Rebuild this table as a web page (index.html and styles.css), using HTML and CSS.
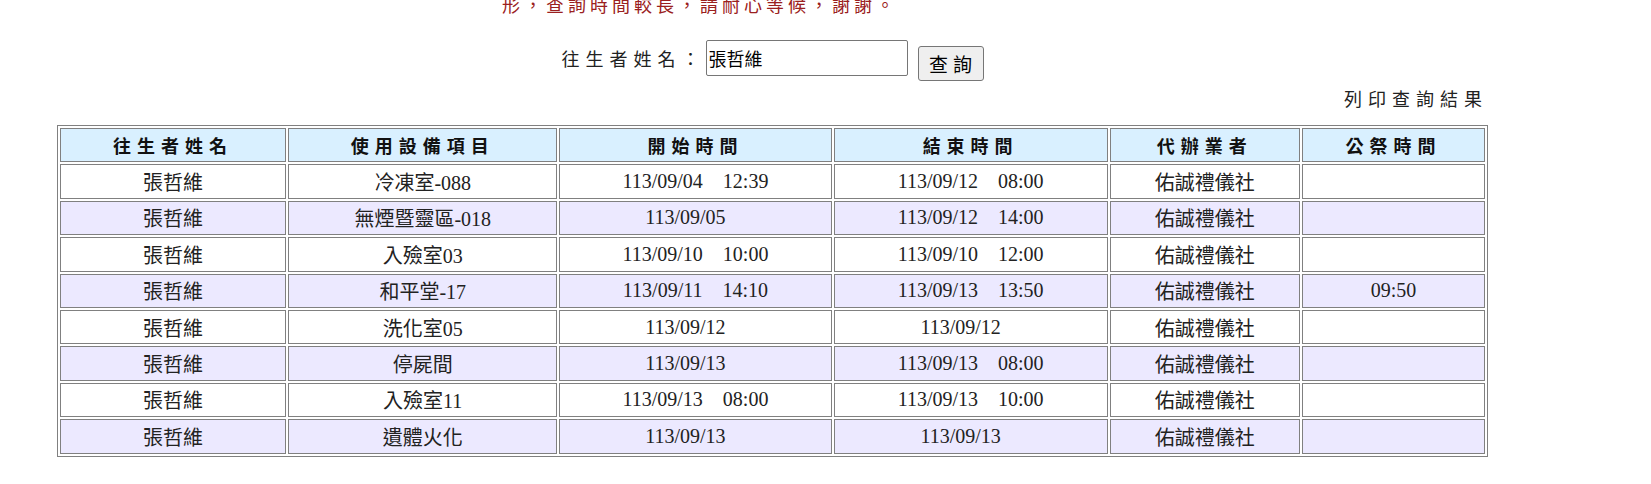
FILE: index.html
```html
<!DOCTYPE html>
<html lang="zh-Hant">
<head>
<meta charset="utf-8">
<title>查詢結果</title>
<link rel="stylesheet" href="styles.css">
</head>
<body>
<div class="page">
  <p class="notice">形，查詢時間較長，請耐心等候，謝謝。</p>
  <form class="search">
    <label class="search-label" for="name">往生者姓名：</label><input id="name" class="search-input" type="text" value="張哲維"><button type="button" class="search-btn">查詢</button>
  </form>
  <div class="print-row"><a class="print-link">列印查詢結果</a></div>
  <table class="result">
    <thead>
      <tr>
        <th class="c1">往生者姓名</th>
        <th class="c2">使用設備項目</th>
        <th class="c3">開始時間</th>
        <th class="c4">結束時間</th>
        <th class="c5">代辦業者</th>
        <th class="c6">公祭時間</th>
      </tr>
    </thead>
    <tbody>
      <tr>
        <td>張哲維</td><td>冷凍室-088</td><td>113/09/04&nbsp;&nbsp;&nbsp;&nbsp;12:39</td><td>113/09/12&nbsp;&nbsp;&nbsp;&nbsp;08:00</td><td>佑誠禮儀社</td><td></td>
      </tr>
      <tr class="alt">
        <td>張哲維</td><td>無煙暨靈區-018</td><td>113/09/05&nbsp;&nbsp;&nbsp;&nbsp;</td><td>113/09/12&nbsp;&nbsp;&nbsp;&nbsp;14:00</td><td>佑誠禮儀社</td><td></td>
      </tr>
      <tr>
        <td>張哲維</td><td>入殮室03</td><td>113/09/10&nbsp;&nbsp;&nbsp;&nbsp;10:00</td><td>113/09/10&nbsp;&nbsp;&nbsp;&nbsp;12:00</td><td>佑誠禮儀社</td><td></td>
      </tr>
      <tr class="alt">
        <td>張哲維</td><td>和平堂-17</td><td>113/09/11&nbsp;&nbsp;&nbsp;&nbsp;14:10</td><td>113/09/13&nbsp;&nbsp;&nbsp;&nbsp;13:50</td><td>佑誠禮儀社</td><td>09:50</td>
      </tr>
      <tr>
        <td>張哲維</td><td>洗化室05</td><td>113/09/12&nbsp;&nbsp;&nbsp;&nbsp;</td><td>113/09/12&nbsp;&nbsp;&nbsp;&nbsp;</td><td>佑誠禮儀社</td><td></td>
      </tr>
      <tr class="alt">
        <td>張哲維</td><td>停屍間</td><td>113/09/13&nbsp;&nbsp;&nbsp;&nbsp;</td><td>113/09/13&nbsp;&nbsp;&nbsp;&nbsp;08:00</td><td>佑誠禮儀社</td><td></td>
      </tr>
      <tr>
        <td>張哲維</td><td>入殮室11</td><td>113/09/13&nbsp;&nbsp;&nbsp;&nbsp;08:00</td><td>113/09/13&nbsp;&nbsp;&nbsp;&nbsp;10:00</td><td>佑誠禮儀社</td><td></td>
      </tr>
      <tr class="alt">
        <td>張哲維</td><td>遺體火化</td><td>113/09/13&nbsp;&nbsp;&nbsp;&nbsp;</td><td>113/09/13&nbsp;&nbsp;&nbsp;&nbsp;</td><td>佑誠禮儀社</td><td></td>
      </tr>
    </tbody>
  </table>
</div>
</body>
</html>
```

FILE: styles.css
```css
html, body {
  margin: 0;
  padding: 0;
  background: #ffffff;
}

body {
  font-family: "Noto Sans CJK TC", "Noto Sans", sans-serif;
  color: #000;
  overflow: hidden;
}

.page {
  width: 1431px;
  margin-left: 57px;
}

.notice {
  margin: -8px 0 0 0;
  padding-left: 445px;
  font-size: 18px;
  line-height: 24px;
  letter-spacing: 4px;
  color: #9a2020;
}

.search {
  margin: 24px 0 0 0;
  text-align: center;
  font-size: 18px;
  line-height: 24px;
}

.search-label {
  letter-spacing: 6px;
  color: #222;
}

.search-input {
  box-sizing: border-box;
  width: 202px;
  height: 36px;
  margin: 0;
  padding: 0 2px;
  border: 1px solid #767676;
  border-radius: 2px;
  font-family: "Noto Sans CJK TC", sans-serif;
  font-size: 18px;
  color: #000;
  vertical-align: baseline;
}

.search-btn {
  box-sizing: border-box;
  width: 66px;
  height: 35px;
  margin: 0 0 0 10px;
  padding: 0 0 0 5px;
  border: 1px solid #767676;
  border-radius: 3px;
  background: #efefef;
  font-family: "Noto Sans CJK TC", sans-serif;
  font-size: 19px;
  letter-spacing: 5px;
  color: #000;
  vertical-align: -6px;
}

.print-row {
  margin-top: 5px;
  text-align: right;
  font-size: 18px;
  line-height: 24px;
}

.print-link {
  letter-spacing: 6px;
  color: #222;
}

.result {
  margin-top: 15px;
  width: 1431px;
  table-layout: fixed;
  border: 1px solid #808080;
  border-spacing: 2px;
  border-collapse: separate;
}

.result th,
.result td {
  box-sizing: border-box;
  height: 34.4px;
  padding: 0;
  border: 1px solid #808080;
  text-align: center;
  vertical-align: middle;
}

.result th {
  background: #d9f0ff;
  font-family: "Liberation Sans", "Noto Sans CJK TC", sans-serif;
  font-size: 18px;
  font-weight: bold;
  letter-spacing: 6px;
  color: #111;
}

.result td {
  background: #ffffff;
  font-family: "Liberation Serif", "Noto Sans CJK TC", serif;
  font-size: 20px;
  color: #222;
}

.result tr.alt td {
  background: #ece9ff;
}

.c1 { width: 226px; }
.c2 { width: 269px; }
.c3 { width: 272px; }
.c4 { width: 274px; }
.c5 { width: 190px; }
.c6 { width: 183px; }
```
